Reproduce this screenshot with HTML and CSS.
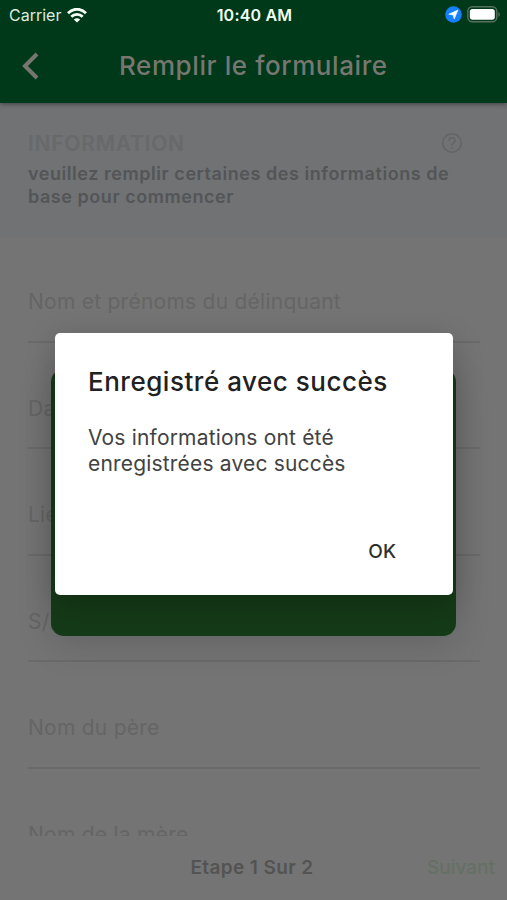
FILE: index.html
```html
<!DOCTYPE html>
<html lang="fr">
<head>
<meta charset="utf-8">
<title>Remplir le formulaire</title>
<link rel="stylesheet" href="styles.css">
</head>
<body>
<div class="screen">
  <header class="header">
    <div class="status">
      <div class="status-left">
        <span class="carrier">Carrier</span>
        <svg class="wifi" width="20" height="15" viewBox="0 0 20 15" fill="none" stroke="#f4fff6" stroke-width="2.9">
          <path d="M1 5.3C6-.1 14-.1 19 5.3"/>
          <path d="M4.3 8.8C7.5 5.6 12.5 5.6 15.7 8.8"/>
          <path d="M10 14.6 6.8 11.5Q10 8.8 13.2 11.5Z" fill="#f4fff6" stroke="none"/>
        </svg>
      </div>
      <span class="clock">10:40 AM</span>
      <div class="status-right">
        <svg width="17" height="17" viewBox="0 0 17 17"><circle cx="8.5" cy="8.5" r="8.3" fill="#1480fb"/><path d="M13 4 9.2 13 8.2 9 3.8 8.2Z" fill="#fff" stroke="#fff" stroke-width=".6" stroke-linejoin="round"/></svg>
        <svg width="33" height="17" viewBox="0 0 33 17"><rect x=".8" y=".8" width="29" height="15" rx="4.5" fill="none" stroke="#55715e" stroke-width="1.4"/><rect x="2.8" y="2.9" width="25" height="10.8" rx="2.7" fill="#fff"/><path d="M31.4 6v4.8q1.4-.8 1.4-2.4T31.4 6Z" fill="#55715e"/></svg>
      </div>
    </div>
    <div class="navbar">
      <svg class="back" width="18" height="28" viewBox="0 0 18 28" fill="none" stroke="#777671" stroke-width="4"><path d="M16 2 4 14 16 26"/></svg>
      <h1 class="title">Remplir le formulaire</h1>
    </div>
  </header>

  <section class="info">
    <div class="info-head">
      <h2 class="info-title">INFORMATION</h2>
      <svg class="help" width="22" height="22" viewBox="0 0 22 22" fill="none" stroke="#626466" stroke-width="1.5"><circle cx="11" cy="11" r="9.3"/><path d="M8 8.8C8 4.8 14 4.9 14 8.7 14 10.8 11 11.1 11 13.5M11 15.2v1.8"/></svg>
    </div>
    <p class="info-text">veuillez remplir certaines des informations de<br>base pour commencer</p>
  </section>

  <main class="form">
    <div class="field"><label>Nom et prénoms du délinquant</label></div>
    <div class="field"><label>Date</label></div>
    <div class="field"><label>Lieu</label></div>
    <div class="field"><label>S/P</label></div>
    <div class="field"><label>Nom du père</label></div>
    <div class="field"><label>Nom de la mère</label></div>
  </main>

  <footer class="footer">
    <span></span>
    <span class="step">Etape 1 Sur 2</span>
    <span class="next">Suivant</span>
  </footer>

  <div class="panel"></div>
  <div class="dialog" role="dialog">
    <h3 class="dialog-title">Enregistré avec succès</h3>
    <p class="dialog-text">Vos informations ont été<br>enregistrées avec succès</p>
    <div class="actions"><button class="ok">OK</button></div>
  </div>
</div>
</body>
</html>
```

FILE: styles.css
```css
* { box-sizing: border-box; }
body { margin: 0; font-family: Inter, "Liberation Sans", sans-serif; background: #747474; }
h1, h2, h3, p { margin: 0; }
.screen { position: relative; width: 507px; height: 900px; overflow: hidden; display: flex; flex-direction: column; white-space: nowrap; }

.header { position: relative; height: 103px; flex: none; background: #00381a; box-shadow: 0 1px 5px rgba(0, 0, 0, .45); z-index: 1; }
.status { display: grid; grid-template-columns: 1fr auto 1fr; height: 30px; align-items: center; padding: 0 7px 0 9px; color: #f0fff3; }
.status-left, .status-right { display: flex; align-items: center; }
.status-left { gap: 6px; }
.status-right { justify-content: flex-end; gap: 5px; padding-bottom: 1px; }
.carrier { font-size: 16px; color: #dcecdf; }
.clock { font-size: 16px; font-weight: 600; letter-spacing: .2px; }
.navbar { display: flex; align-items: center; height: 72px; padding-left: 21px; }
.back { margin-right: 80px; }
.title { font-size: 26px; font-weight: 500; line-height: 32px; letter-spacing: .58px; color: #777671; }

.info { flex: none; height: 134px; padding: 28px 44px 0 28px; background: #707274; }
.info-head { display: flex; justify-content: space-between; align-items: center; height: 24px; }
.info-title { font-size: 21px; font-weight: 600; letter-spacing: .75px; color: #67696b; }
.info-text { padding-top: 7px; font-size: 18px; font-weight: 600; line-height: 23px; letter-spacing: .55px; color: #535557; }

.form { flex: none; height: 600px; overflow: hidden; margin-top: -1px; }
.field { display: flex; align-items: center; height: 106.5px; margin: 0 27px 0 28px; padding-top: 27px; border-bottom: 2px solid #6a6a6a; font-size: 21px; letter-spacing: .25px; color: #656565; }

.footer { flex: 1; display: grid; grid-template-columns: 1fr auto 1fr; align-items: center; padding: 0 12px 1px 9px; font-size: 19px; font-weight: 600; }
.step { letter-spacing: .38px; color: #535353; }
.next { justify-self: end; font-weight: 500; color: #647064; }

.panel { position: absolute; left: 51px; top: 369px; width: 405px; height: 267px; border-radius: 13px; background: #153a17; box-shadow: 0 8px 36px rgba(0, 0, 0, .14); z-index: 2; }
.dialog { position: absolute; left: 55px; top: 333px; width: 398px; height: 262px; padding: 33px; border-radius: 5px; background: #fff; box-shadow: 0 8px 30px rgba(0, 0, 0, .22); z-index: 3; }
.dialog-title { font-size: 26px; font-weight: 450; line-height: 32px; letter-spacing: .52px; color: #212121; }
.dialog-text { margin-top: 27px; font-size: 21px; line-height: 26px; letter-spacing: .18px; color: #424242; }
.actions { display: flex; justify-content: flex-end; margin-top: 63px; padding-right: 24px; }
.ok { padding: 0; border: 0; background: none; font: 500 19px/24px Inter, sans-serif; color: #303030; }
```
